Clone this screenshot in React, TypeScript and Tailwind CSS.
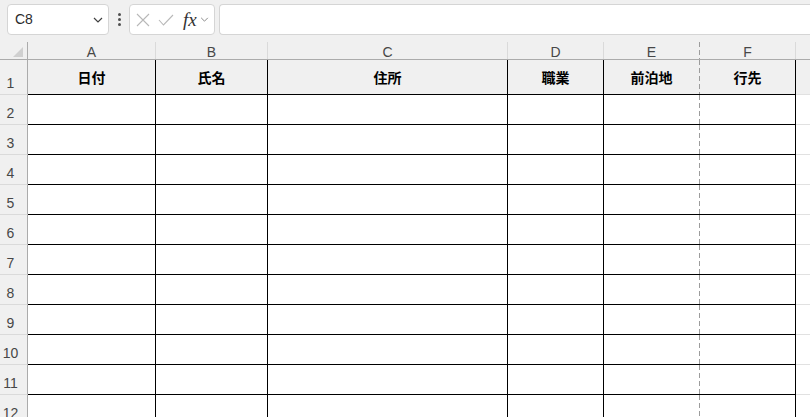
import React from "react"

const headers = ["日付", "氏名", "住所", "職業", "前泊地", "行先"]
const letters = ["A", "B", "C", "D", "E", "F"]

// widths include the 1px right border
const cols = "grid-cols-[28px_128px_112px_240px_96px_96px_96px_1fr]"

// page-break line between E and F
const dashed = "w-px self-stretch bg-[linear-gradient(#9c9c9c_62%,transparent_62%)] bg-[length:1px_8px]"

function Chevron({ className }: { className?: string }) {
    return (
        <svg viewBox="0 0 10 6" className={className} fill="none" stroke="currentColor" strokeWidth="1.2">
            <path d="M1 1l4 4 4-4" />
        </svg>
    )
}

function Toolbar() {
    return (
        <div className="flex h-[42px] items-start bg-[#f0f0f0] pt-[4px]">
            {/* Name box */}
            <div className="ml-[7px] flex h-[31px] w-[102px] items-center justify-between rounded-[4px] border border-[#d5d5d5] bg-white pl-[7px] pr-[5px]">
                <span className="text-[14px] text-[#2b2b2b] [font-family:'Liberation_Sans',sans-serif]">C8</span>
                <Chevron className="h-[6px] w-[10px] text-[#404040]" />
            </div>
            {/* dots */}
            <div className="flex h-[31px] w-[20px] flex-col items-center justify-center gap-[2px]">
                <span className="h-[3px] w-[3px] rounded-full bg-[#505050]" />
                <span className="h-[3px] w-[3px] rounded-full bg-[#505050]" />
                <span className="h-[3px] w-[3px] rounded-full bg-[#505050]" />
            </div>
            {/* formula buttons */}
            <div className="flex h-[31px] w-[86px] items-center rounded-[4px] border border-[#d5d5d5] bg-white pl-[6px]">
                <svg viewBox="0 0 14 14" className="h-[14px] w-[14px] text-[#b8b8b8]" fill="none" stroke="currentColor" strokeWidth="1.1">
                    <path d="M1 1l12 12M13 1L1 13" />
                </svg>
                <svg viewBox="0 0 16 12" className="ml-[8px] h-[12px] w-[16px] text-[#b8b8b8]" fill="none" stroke="currentColor" strokeWidth="1.1">
                    <path d="M1 6l4.5 5L15 1" />
                </svg>
                <span className="ml-[9px] text-[19px] italic leading-none text-[#333] [font-family:'Liberation_Serif',serif]">fx</span>
                <Chevron className="ml-[3px] h-[5px] w-[9px] text-[#8a8a8a]" />
            </div>
            {/* formula input */}
            <div className="ml-[4px] h-[31px] flex-1 rounded-l-[4px] border border-r-0 border-[#d5d5d5] bg-white" />
        </div>
    )
}

function ColumnHeader() {
    return (
        <div className={`grid ${cols} h-[18px] bg-[#f0f0f0]`}>
            <div className="relative border-r border-b border-[#ababab]">
                <svg viewBox="0 0 10 10" className="absolute right-[4px] bottom-[2px] h-[10px] w-[10px]">
                    <path d="M10 0V10H0Z" fill="#d0d0d0" />
                </svg>
            </div>
            {letters.map((l, i) => (
                <div key={l} className="flex border-b border-[#ababab]">
                    <div className="flex flex-1 items-center justify-center pt-[2px] text-[14px] leading-none text-[#474747] [font-family:'Liberation_Sans',sans-serif]">
                        {l}
                    </div>
                    {i === 4 ? <div className={dashed} /> : <div className="w-px self-stretch bg-[#dadada]" />}
                </div>
            ))}
            <div className="border-b border-[#ababab]" />
        </div>
    )
}

function Row({ n }: { n: number }) {
    const first = n === 1
    const fill = first ? "bg-[#f0f0f0]" : "bg-white"
    return (
        <div className={`grid ${cols} ${first ? "h-[35px]" : "h-[30px]"}`}>
            <div className="flex items-end justify-center border-r border-b border-r-[#ababab] border-b-[#dadada] bg-[#f0f0f0] pr-[6px] pb-[2px] text-[14px] leading-[18px] text-[#474747] [font-family:'Liberation_Sans',sans-serif]">
                {n}
            </div>
            {headers.map((h, i) => (
                <div key={i} className={`flex border-b border-b-black ${fill}`}>
                    <div className="flex flex-1 items-center justify-center text-[14px] font-bold text-black [font-family:'Noto_Sans_CJK_JP',sans-serif]">
                        {first ? h : ""}
                    </div>
                    {i === 4 ? <div className={dashed} /> : <div className="w-px self-stretch bg-black" />}
                </div>
            ))}
            <div className={`border-b border-[#e1e1e1] ${fill}`} />
        </div>
    )
}

export default function App() {
    const rows = Array.from({ length: 13 }, (_, i) => i + 1)
    return (
        <div className="h-[417px] w-[810px] overflow-hidden bg-white">
            <Toolbar />
            <ColumnHeader />
            {rows.map((n) => (
                <Row key={n} n={n} />
            ))}
        </div>
    )
}
